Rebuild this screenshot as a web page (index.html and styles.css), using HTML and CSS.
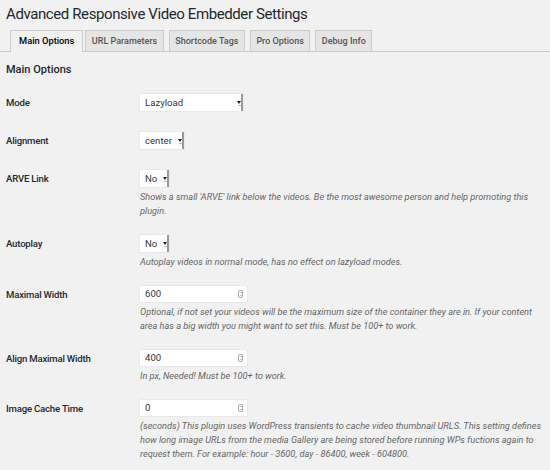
FILE: index.html
```html
<!DOCTYPE html>
<html lang="en">
<head>
<meta charset="utf-8">
<title>Advanced Responsive Video Embedder Settings</title>
<link rel="stylesheet" href="styles.css">
</head>
<body>
<div class="wrap">
  <h1 class="page-title">Advanced Responsive Video Embedder Settings</h1>
  <nav class="tabs">
    <span class="tab active">Main Options</span>
    <span class="tab">URL Parameters</span>
    <span class="tab">Shortcode Tags</span>
    <span class="tab">Pro Options</span>
    <span class="tab">Debug Info</span>
  </nav>
  <h2 class="section-title">Main Options</h2>
  <div class="form">
    <div class="row">
      <div class="label">Mode</div>
      <div class="field">
        <div class="select w-mode"><span class="val">Lazyload</span><span class="arrow"></span></div>
      </div>
    </div>
    <div class="row">
      <div class="label">Alignment</div>
      <div class="field">
        <div class="select"><span class="val">center</span><span class="arrow"></span></div>
      </div>
    </div>
    <div class="row">
      <div class="label">ARVE Link</div>
      <div class="field">
        <div class="select"><span class="val">No</span><span class="arrow"></span></div>
        <p class="desc">Shows a small 'ARVE' link below the videos. Be the most awesome person and help promoting this plugin.</p>
      </div>
    </div>
    <div class="row">
      <div class="label">Autoplay</div>
      <div class="field">
        <div class="select"><span class="val">No</span><span class="arrow"></span></div>
        <p class="desc">Autoplay videos in normal mode, has no effect on lazyload modes.</p>
      </div>
    </div>
    <div class="row">
      <div class="label">Maximal Width</div>
      <div class="field">
        <div class="number"><span class="val">600</span><span class="spin"></span></div>
        <p class="desc">Optional, if not set your videos will be the maximum size of the container they are in. If your content area has a big width you might want to set this. Must be 100+ to work.</p>
      </div>
    </div>
    <div class="row">
      <div class="label">Align Maximal Width</div>
      <div class="field">
        <div class="number"><span class="val">400</span><span class="spin"></span></div>
        <p class="desc">In px, Needed! Must be 100+ to work.</p>
      </div>
    </div>
    <div class="row">
      <div class="label">Image Cache Time</div>
      <div class="field">
        <div class="number"><span class="val">0</span><span class="spin"></span></div>
        <p class="desc">(seconds) This plugin uses WordPress transients to cache video thumbnail URLS. This setting defines how long image URLs from the media Gallery are being stored before running WPs fuctions again to request them. For example: hour - 3600, day - 86400, week - 604800.</p>
      </div>
    </div>
  </div>
</div>
</body>
</html>
```

FILE: styles.css
```css
* { box-sizing: border-box; }
html, body {
  margin: 0;
  padding: 0;
  background: #f1f1f1;
  color: #23282d;
  font-family: Roboto, "Liberation Sans", Arial, sans-serif;
}
.wrap {
  padding: 4px 0 0 6px;
  overflow: hidden;
  height: 470px;
}
.page-title {
  margin: 0;
  font-size: 15px;
  font-weight: 400;
  letter-spacing: -0.4px;
  line-height: 20px;
  color: #23282d;
}
.tabs {
  display: flex;
  gap: 5px;
  margin: 6px -6px 0 -6px;
  padding-left: 10px;
  border-bottom: 1px solid #ccc;
  height: 22px;
}
.tab {
  display: block;
  height: 21px;
  padding: 0 5.5px;
  border: 1px solid #ccc;
  border-bottom: none;
  background: #e5e5e5;
  color: #555;
  font-size: 9px;
  font-weight: 500;
  line-height: 20px;
  white-space: nowrap;
}
.tab.active {
  background: #f1f1f1;
  color: #000;
  height: 22px;
  padding: 0 8px;
  font-size: 9.3px;
  margin-right: -3px;
}
.section-title {
  margin: 10px 0 0 0;
  font-size: 11px;
  font-weight: 500;
  line-height: 16px;
  color: #23282d;
}
.form {
  margin-top: 7px;
}
.row {
  display: flex;
  padding: 9px 0 8px 0;
}
.label {
  width: 134px;
  flex: none;
  min-height: 21px;
  font-size: 9.6px;
  font-weight: 500;
  letter-spacing: -0.2px;
  line-height: 17px;
  color: #23282d;
}
.field {
  flex: 1;
  min-width: 0;
  padding-right: 4px;
}
.select {
  display: flex;
  width: max-content;
  align-items: center;
  height: 17px;
  background: #fff;
  box-shadow: 0 0 0 0.5px #e2e2e2;
  font-size: 9.6px;
  color: #32373c;
}
.select .val {
  padding: 0 6px 0 5px;
  line-height: 17px;
}
.select.w-mode { width: 103px; justify-content: space-between; }
.select .arrow {
  position: relative;
  width: 6px;
  height: 17px;
  border-right: 2px solid #9a9a9a;
}
.select .arrow::before {
  content: "";
  position: absolute;
  left: 0;
  top: 7px;
  width: 0;
  height: 0;
  border-left: 2.5px solid transparent;
  border-right: 2.5px solid transparent;
  border-top: 3px solid #222;
}
.select .arrow::after {
  content: "";
  position: absolute;
  left: 1px;
  top: 11px;
  width: 3px;
  height: 1px;
  background: #bbb;
}
.number {
  display: flex;
  align-items: center;
  justify-content: space-between;
  width: 107px;
  height: 16px;
  margin-bottom: 2px;
  background: #fff;
  box-shadow: 0 0 0 0.5px #e2e2e2;
  font-size: 9.6px;
  color: #32373c;
}
.number .val {
  padding-left: 5px;
  line-height: 16px;
}
.number .spin {
  position: relative;
  width: 5px;
  height: 8px;
  margin-right: 4px;
  border: 1px solid #aaa;
  border-radius: 2px;
}
.number .spin::before,
.number .spin::after {
  content: "";
  position: absolute;
  left: 0.5px;
  width: 0;
  height: 0;
  border-left: 1px solid transparent;
  border-right: 1px solid transparent;
}
.number .spin::before { top: 1px; border-bottom: 1.5px solid #888; }
.number .spin::after { bottom: 1px; border-top: 1.5px solid #888; }
.desc {
  margin: 3px 0 0 0;
  font-size: 9.2px;
  font-style: italic;
  line-height: 14px;
  color: #666;
}
```
